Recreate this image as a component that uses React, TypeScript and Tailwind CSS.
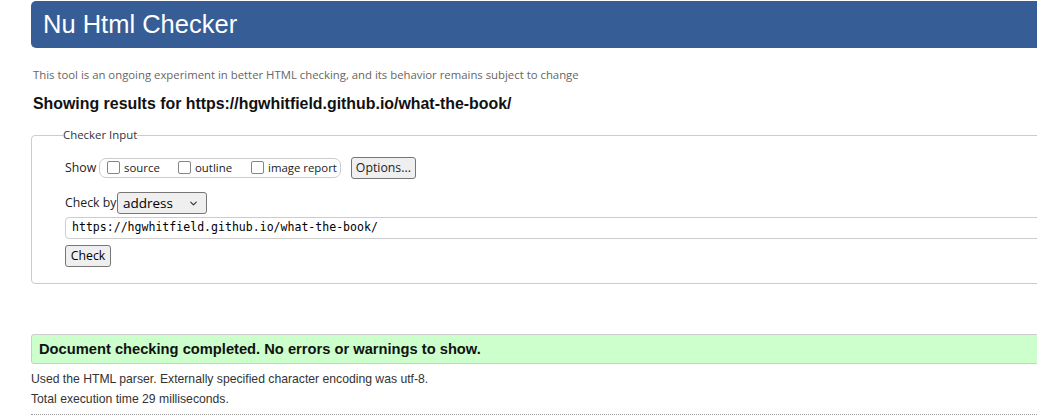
import { ChevronDown } from "lucide-react";

const ui = "font-['Segoe_UI','Open_Sans',sans-serif]";
const arial = "font-['Liberation_Sans',Arial,sans-serif]";

function Box({ label }: { label: string }) {
  return (
    <label className="flex items-center gap-[4px] whitespace-nowrap">
      <span className="w-[13px] h-[13px] shrink-0 border border-[#858585] rounded-[2px] bg-white" />
      <span className="text-[11.4px] text-[#222]">{label}</span>
    </label>
  );
}

export default function App() {
  return (
    <div className="w-[1037px] h-[420px] overflow-hidden bg-white">
      <div className="ml-[31px] w-[1100px] pt-px">
        <header className="h-[47px] bg-[#365d95] rounded-[5px] flex items-center pl-[12px]">
          <h1 className={`${arial} text-white text-[25.5px] leading-none`}>Nu Html Checker</h1>
        </header>

        <p className={`${ui} text-[11.35px] text-[#666] mt-[20px] ml-[2px] leading-[14px]`}>
          This tool is an ongoing experiment in better HTML checking, and its behavior remains subject to change
        </p>
        <h2 className={`${arial} font-bold text-[15.9px] text-[#111] mt-[13px] ml-[2px] leading-[18px]`}>
          Showing results for https://hgwhitfield.github.io/what-the-book/
        </h2>

        {/* Checker input */}
        <fieldset className={`${ui} mt-[15px] border border-[#ccc] rounded-[4px] pl-[33px] pb-[16px] pt-[15px]`}>
          <legend className="-ml-[2px] text-[11.4px] text-[#333] leading-[14px]">Checker Input</legend>

          <div className="flex items-center text-[12.3px] text-[#222]">
            <span className="w-[34px]">Show</span>
            <div className="flex items-center h-[20px] border border-[#ccc] rounded-[7px] pl-[7px] pr-[3px]">
              <div className="w-[71px]"><Box label="source" /></div>
              <div className="w-[73px]"><Box label="outline" /></div>
              <Box label="image report" />
            </div>
            <button className="ml-[10px] h-[22px] w-[65px] bg-[#efefef] border border-[#767676] rounded-[3px] text-[12.3px] leading-none">
              Options...
            </button>
          </div>

          <div className="flex items-center mt-[13px] text-[12.3px] text-[#222]">
            <span className="w-[52px]">Check by</span>
            <div className="w-[90px] h-[22px] border border-[#767676] rounded-[3px] bg-[#efefef] flex items-center justify-between pl-[5px] pr-[7px]">
              <span className="text-[13.5px] text-black">address</span>
              <ChevronDown className="w-[11px] h-[11px] text-[#333]" strokeWidth={2.5} />
            </div>
          </div>

          <div className="mt-[3px] h-[22px] border border-[#ccc] rounded-l-[4px] flex items-center pl-[6px]">
            <span className="font-['DejaVu_Sans_Mono',monospace] text-[11.55px] text-black">
              https://hgwhitfield.github.io/what-the-book/
            </span>
          </div>

          <button className="mt-[6px] h-[22px] w-[46px] bg-[#efefef] border border-[#767676] rounded-[3px] text-[12.3px] leading-none text-black">
            Check
          </button>
        </fieldset>

        {/* Result */}
        <div className={`${arial} mt-[50px] h-[30px] bg-[#ccffcc] border border-[#ccc] rounded-[3px] flex items-center pl-[7px]`}>
          <span className="font-bold text-[14.7px] text-[#111]">
            Document checking completed. No errors or warnings to show.
          </span>
        </div>
        <p className={`${arial} text-[12.2px] text-[#333] mt-[8px] leading-[14px]`}>
          Used the HTML parser. Externally specified character encoding was utf-8.
        </p>
        <p className={`${arial} text-[12.2px] text-[#333] mt-[6px] leading-[14px]`}>
          Total execution time 29 milliseconds.
        </p>
        <div className="mt-[8px] border-t border-dotted border-[#999]" />
      </div>
    </div>
  );
}
